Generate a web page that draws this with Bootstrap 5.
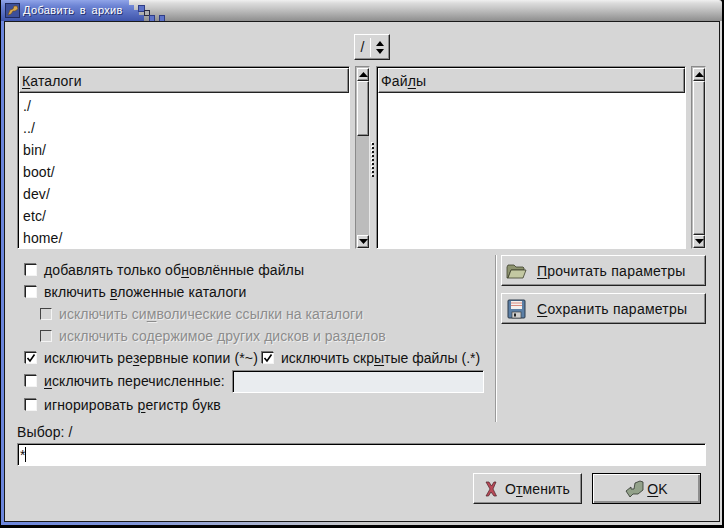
<!DOCTYPE html>
<html>

<head>
  <title>Добавить в архив</title>
  <meta charset="UTF-8">
  <link href="https://cdn.jsdelivr.net/npm/bootstrap@5.3.3/dist/css/bootstrap.min.css" rel="stylesheet">
  <style>
    html, body { margin: 0; width: 724px; height: 528px; overflow: hidden; background: #000; }
    body { font-family: "Liberation Sans", Arial, sans-serif; font-size: 14px; line-height: 16px; letter-spacing: .12px; color: #111; }
    u { text-underline-offset: 2px; text-decoration-thickness: 1px; }

    /* window manager frame */
    .wm-root { height: 528px; padding: 0 2px 3px 1px; display: flex; flex-direction: column; }
    .wm-bar { height: 21px; flex: none; display: flex; border-radius: 0 3px 0 0; background: linear-gradient(#f0f0f0 0, #dcdcdc 3px, #c8c8c8 8px, #8e8e8e 100%); }
    .wm-tab { width: 127px; height: 21px; display: flex; align-items: center; gap: 3px; padding-left: 4px; color: #fff; background: linear-gradient(#90a4e8 0, #6d84d4 6px, #3f55ab 100%); }
    .wm-ico { width: 15px; height: 15px; flex: none; display: block; }
    .wm-name { font-size: 11px; letter-spacing: .35px; word-spacing: 2px; line-height: 21px; white-space: nowrap; text-shadow: 1px 1px 0 #26336f; }
    .wm-steps { width: 40px; height: 21px; display: block; flex: none; }
    .wm-mid { flex: 1; padding: 0 2px 3px 3px; background: linear-gradient(90deg, #6c86dc 0, #7f94d8 18%, #c8c8c8 50%, #d8d8d8 100%); display: flex; }
    .dlg { flex: 1; min-width: 0; background: #d6d6d6; border: 1px solid #1a1a1a; padding: 12px 13px 0 12px; display: flex; flex-direction: column; }

    /* bevels */
    .bev-up { background: #d6d6d6; border: 1px solid; border-color: #fff #222 #222 #fff; box-shadow: inset -1px -1px 0 #8e8e8e; }
    .bev-in { border: 1px solid; border-color: #8a8a8a #fff #fff #8a8a8a; box-shadow: inset 1px 1px 0 #000; }

    .combo-row { padding-left: 20px; height: 26px; }
    .combo-box { width: 36px; height: 26px; display: flex; align-items: center; padding-left: 6px; }
    .combo-sep { width: 1px; height: 19px; background: #fff; margin-left: 5px; margin-right: 5px; }

    .pane-row { margin-top: 6px; height: 183px; }
    .pane-list { background: #fff; display: flex; flex-direction: column; padding: 1px 0 0 1px; overflow: hidden; }
    .pane-dirs { width: 333px; }
    .pane-files { width: 310px; }
    .pane-head { height: 25px; flex: none; padding-left: 2px; line-height: 24px; }
    .pane-items { --bs-list-group-bg: #fff; --bs-list-group-border-width: 0; --bs-list-group-border-radius: 0; padding-top: 2px; }
    .pane-items .list-group-item { height: 22px; padding: 0 0 0 4px; line-height: 22px; color: #111; }

    .sbar { width: 15px; margin-left: 5px; flex: none; background: #bcbcbc; display: flex; flex-direction: column; padding: 1px 0 0 1px; border: 1px solid; border-color: #8a8a8a #e8e8e8 #e8e8e8 #8a8a8a; }
    .sbar-btn { height: 13px; flex: none; display: flex; align-items: center; justify-content: center; }
    .sbar-btn svg { display: block; }
    .sbar-thumb { flex: none; }
    .sbar-short { height: 55px; }
    .sbar-full { flex: 1; }
    .sbar-fill { flex: 1; }
    .pane-grip { width: 6px; flex: none; display: flex; flex-direction: column; align-items: center; padding-top: 77px; gap: 2px; }
    .pane-grip i { display: block; width: 2px; height: 2px; background: #111; box-shadow: -1px -1px 0 #fff; }

    /* options */
    .opt-area { margin-top: 6px; height: 167px; }
    .opt-left { width: 478px; padding: 4px 0 0 8px; flex: none; }
    .opt-line { height: 22px; display: flex; align-items: center; }
    .opt-tall { height: 24px; }
    .opt-sub { padding-left: 15px; }
    .opt-sep { width: 2px; flex: none; background: #9a9a9a; border-right: 1px solid #fff; }
    .opt-right { padding-left: 4px; flex: 1; min-width: 0; gap: 7px; }
    .opt-tight { letter-spacing: 0; }

    .wm-check { appearance: none; margin: 0 7px 0 0; width: 12px; height: 12px; flex: none; background: #fff center no-repeat; border: 1px solid; border-color: #222 #f4f4f4 #f4f4f4 #222; box-shadow: -1px -1px 0 #777; }
    .wm-check:checked { background-image: url("data:image/svg+xml,%3Csvg xmlns='http://www.w3.org/2000/svg' width='10' height='10'%3E%3Cpath d='M1.500 5l2.500 3L8.500 1.500' fill='none' stroke='%23000' stroke-width='1.6'/%3E%3C/svg%3E"); }
    .wm-check:disabled { background-color: #d6d6d6; border-color: #444 #f4f4f4 #f4f4f4 #444; box-shadow: none; }
    .opt-off { color: #8c8c8c; text-shadow: 1px 1px 0 #eee; letter-spacing: .06px; }
    .wm-entry { border-radius: 0; padding: 0 2px; font-size: 14px; line-height: 16px; color: #111; min-height: 0; }
    .wm-entry-off { width: 252px; height: 23px; margin-left: 7px; background: #e8e8e8; }
    .wm-entry-main { height: 23px; background: linear-gradient(#000, #000) 7px 3px / 1px 15px no-repeat, #fff; }

    .wm-btn { --bs-btn-border-radius: 0; --bs-btn-font-size: 14px; --bs-btn-color: #111; --bs-btn-line-height: 16px; display: flex; align-items: center; height: 31px; padding: 0; background: #d6d6d6; border: 1px solid; border-color: #fff #222 #222 #fff; box-shadow: inset -1px -1px 0 #8e8e8e; color: #111; letter-spacing: .25px; }
    .wm-btn-side { width: 205px; }
    .wm-btn-side svg { margin-left: 3px; width: 22px; height: 22px; flex: none; }
    .wm-btn-side span { margin-left: 10px; }
    .wm-btn-foot { width: 109px; justify-content: center; letter-spacing: .12px; }
    .wm-x { margin-right: 8px; }
    .wm-hand { margin-right: 3px; }
    .wm-btn-ok { border-color: #000; box-shadow: inset 1px 1px 0 #fff, inset -2px -2px 0 #8e8e8e; }

    .sel-label { height: 21px; line-height: 21px; }
    .foot-row { margin-top: 7px; padding-right: 5px; gap: 10px; }
  </style>
</head>

<body>
  <div class="wm-root">
    <div class="wm-bar">
      <div class="wm-tab">
        <svg class="wm-ico" viewBox="0 0 15 15"><rect x=".5" y=".5" width="14" height="14" fill="#3d4f9a" stroke="#20295c"/><path d="M3 12l2-5 3-1 1-3 3 0 1 3-3 2-2 0-2 3z" fill="#d8a850" stroke="#6b4a18" stroke-width=".6"/></svg>
        <span class="wm-name">Добавить в архив</span>
      </div>
      <svg class="wm-steps" viewBox="0 0 40 21" shape-rendering="crispEdges">
        <defs><linearGradient id="tabg" x1="0" y1="0" x2="0" y2="1"><stop offset="0" stop-color="#90a4e8"/><stop offset=".3" stop-color="#6d84d4"/><stop offset="1" stop-color="#3f55ab"/></linearGradient></defs>
        <path d="M0 0h1v5h5v5h5v5h5v6H0z" fill="url(#tabg)"/>
        <rect x="10" y="5" width="6" height="6" fill="#5c72c8" stroke="#2f3d86"/>
        <rect x="16" y="10" width="5" height="5" fill="#b0b0b0" stroke="#2a2a40"/>
        <rect x="21" y="15" width="5" height="6" fill="#5c72c8" stroke="#2f3d86"/>
        <rect x="31" y="15" width="5" height="6" fill="#5c72c8" stroke="#2f3d86"/>
      </svg>
    </div>
    <div class="wm-mid">
      <div class="dlg">
        <div class="combo-row d-flex justify-content-center">
          <div class="combo-box bev-up">
            <span>/</span><span class="combo-sep"></span>
            <svg width="8" height="13" viewBox="0 0 8 13"><path d="M4 0l4 5H0zM0 8h8l-4 5z" fill="#000"/></svg>
          </div>
        </div>

        <div class="pane-row d-flex">
          <div class="pane-list pane-dirs bev-in">
            <div class="pane-head bev-up"><u>К</u>аталоги</div>
            <ul class="list-group pane-items">
              <li class="list-group-item">./</li>
              <li class="list-group-item">../</li>
              <li class="list-group-item">bin/</li>
              <li class="list-group-item">boot/</li>
              <li class="list-group-item">dev/</li>
              <li class="list-group-item">etc/</li>
              <li class="list-group-item">home/</li>
            </ul>
          </div>
          <div class="sbar">
            <div class="sbar-btn bev-up"><svg width="9" height="5"><path d="M4.500 0l4.500 5H0z" fill="#000"/></svg></div>
            <div class="sbar-thumb sbar-short bev-up"></div>
            <div class="sbar-fill"></div>
            <div class="sbar-btn bev-up"><svg width="9" height="5"><path d="M0 0h9L4.500 5z" fill="#000"/></svg></div>
          </div>
          <div class="pane-grip"><i></i><i></i><i></i><i></i><i></i><i></i><i></i><i></i><i></i></div>
          <div class="pane-list pane-files bev-in">
            <div class="pane-head bev-up">Фай<u>л</u>ы</div>
          </div>
          <div class="sbar">
            <div class="sbar-btn bev-up"><svg width="9" height="5"><path d="M4.500 0l4.500 5H0z" fill="#000"/></svg></div>
            <div class="sbar-thumb sbar-full bev-up"></div>
            <div class="sbar-btn bev-up"><svg width="9" height="5"><path d="M0 0h9L4.500 5z" fill="#000"/></svg></div>
          </div>
        </div>

        <div class="opt-area d-flex">
          <div class="opt-left">
            <label class="opt-line"><input type="checkbox" class="wm-check"><span>добавлять только об<u>н</u>овлённые файлы</span></label>
            <label class="opt-line"><input type="checkbox" class="wm-check"><span>включить <u>в</u>ложенные каталоги</span></label>
            <label class="opt-line opt-sub opt-off"><input type="checkbox" class="wm-check" disabled><span>исключить си<u>м</u>волические ссылки на каталоги</span></label>
            <label class="opt-line opt-sub opt-off"><input type="checkbox" class="wm-check" disabled><span>исключить содержимое <u>д</u>ругих дисков и разделов</span></label>
            <div class="opt-line">
              <label class="d-flex align-items-center"><input type="checkbox" class="wm-check" checked><span>исключить ре<u>з</u>ервные копии (*~)</span></label>
              <label class="d-flex align-items-center ms-1 opt-tight"><input type="checkbox" class="wm-check" checked><span>исключить скр<u>ы</u>тые файлы (.*)</span></label>
            </div>
            <div class="opt-line opt-tall">
              <label class="d-flex align-items-center"><input type="checkbox" class="wm-check"><span><u>и</u>сключить перечисленные:</span></label>
              <input type="text" class="form-control wm-entry wm-entry-off bev-in" disabled>
            </div>
            <label class="opt-line opt-tall"><input type="checkbox" class="wm-check"><span>игнорировать <u>р</u>егистр букв</span></label>
          </div>
          <div class="opt-sep"></div>
          <div class="opt-right d-flex flex-column">
            <button type="button" class="btn wm-btn wm-btn-side">
              <svg viewBox="0 0 22 22"><path d="M2 7l1-2h6l2 2h7l1 1v2H6l-3 8H2z" fill="#8e9470" stroke="#3c3f2c" stroke-width=".8"/><path d="M3 18l3-8h15l-3 8z" fill="#c3c8a2" stroke="#3c3f2c" stroke-width=".8"/></svg>
              <span><u>П</u>рочитать параметры</span>
            </button>
            <button type="button" class="btn wm-btn wm-btn-side">
              <svg viewBox="0 0 22 22"><rect x="3" y="2" width="17" height="18" rx="1" fill="#5b7fa6" stroke="#2c3a4a"/><rect x="6" y="3" width="11" height="8" fill="#f4f0ee"/><path d="M6 5h11M6 7.500h11" stroke="#d88a80"/><rect x="7" y="14" width="9" height="6" fill="#cfcfcf" stroke="#333" stroke-width=".6"/><rect x="9" y="15.500" width="2" height="3" fill="#222"/></svg>
              <span><u>С</u>охранить параметры</span>
            </button>
          </div>
        </div>

        <div class="sel-label">Выбор: /</div>
        <input type="text" class="form-control wm-entry wm-entry-main bev-in" value="*">

        <div class="foot-row d-flex justify-content-end">
          <button type="button" class="btn wm-btn wm-btn-foot">
            <svg class="wm-x" width="12" height="16" viewBox="0 0 12 16"><path d="M1 15L5 8 1 1h3l2.500 4L9 1h2L8 8l3.500 7H9L6 11l-2.500 4z" fill="#b84a58" stroke="#4a2228" stroke-width=".7"/></svg>
            <span>О<u>т</u>менить</span>
          </button>
          <button type="button" class="btn wm-btn wm-btn-foot wm-btn-ok">
            <svg class="wm-hand" width="19" height="18" viewBox="0 0 19 18"><path d="M1 11l5-4v2h3l1-6 5-2 3 1v8l-5 4H8l-3 3z" fill="#93a28a" stroke="#2f352c" stroke-width=".8"/></svg>
            <span><u>O</u>K</span>
          </button>
        </div>
      </div>
    </div>
  </div>
</body>

</html>
